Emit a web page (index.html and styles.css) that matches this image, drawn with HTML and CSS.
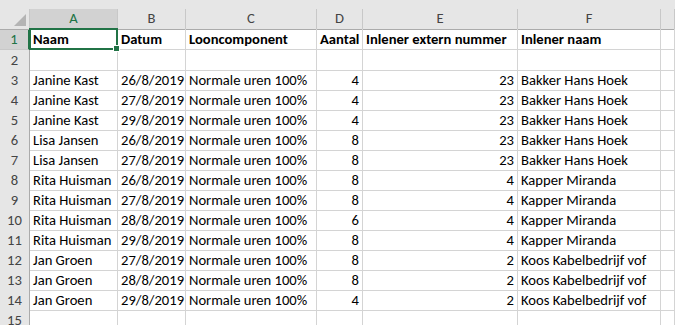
FILE: index.html
```html
<!DOCTYPE html>
<html lang="nl">
<head>
    <meta charset="UTF-8">
    <title>Uren</title>
    <link rel="stylesheet" href="styles.css">
</head>
<body>
    <div class="sheet">
        <div class="topband"></div>
        <div class="row head">
            <div class="corner"><span class="tri"></span></div>
            <div class="colhead sel">A</div>
            <div class="colhead">B</div>
            <div class="colhead">C</div>
            <div class="colhead">D</div>
            <div class="colhead">E</div>
            <div class="colhead">F</div>
            <div class="colhead"></div>
        </div>
        <div class="row first">
            <div class="rownum sel">1</div>
            <div class="cell b active">Naam</div>
            <div class="cell b">Datum</div>
            <div class="cell b">Looncomponent</div>
            <div class="cell b">Aantal</div>
            <div class="cell b">Inlener extern nummer</div>
            <div class="cell b">Inlener naam</div>
            <div class="cell"></div>
        </div>
        <div class="row">
            <div class="rownum">2</div>
            <div class="cell"></div><div class="cell"></div><div class="cell"></div><div class="cell"></div><div class="cell"></div><div class="cell"></div><div class="cell"></div>
        </div>
        <div class="row">
            <div class="rownum">3</div>
            <div class="cell">Janine Kast</div><div class="cell">26/8/2019</div><div class="cell">Normale uren 100%</div><div class="cell num">4</div><div class="cell num">23</div><div class="cell">Bakker Hans Hoek</div><div class="cell"></div>
        </div>
        <div class="row">
            <div class="rownum">4</div>
            <div class="cell">Janine Kast</div><div class="cell">27/8/2019</div><div class="cell">Normale uren 100%</div><div class="cell num">4</div><div class="cell num">23</div><div class="cell">Bakker Hans Hoek</div><div class="cell"></div>
        </div>
        <div class="row">
            <div class="rownum">5</div>
            <div class="cell">Janine Kast</div><div class="cell">29/8/2019</div><div class="cell">Normale uren 100%</div><div class="cell num">4</div><div class="cell num">23</div><div class="cell">Bakker Hans Hoek</div><div class="cell"></div>
        </div>
        <div class="row">
            <div class="rownum">6</div>
            <div class="cell">Lisa Jansen</div><div class="cell">26/8/2019</div><div class="cell">Normale uren 100%</div><div class="cell num">8</div><div class="cell num">23</div><div class="cell">Bakker Hans Hoek</div><div class="cell"></div>
        </div>
        <div class="row">
            <div class="rownum">7</div>
            <div class="cell">Lisa Jansen</div><div class="cell">27/8/2019</div><div class="cell">Normale uren 100%</div><div class="cell num">8</div><div class="cell num">23</div><div class="cell">Bakker Hans Hoek</div><div class="cell"></div>
        </div>
        <div class="row">
            <div class="rownum">8</div>
            <div class="cell">Rita Huisman</div><div class="cell">26/8/2019</div><div class="cell">Normale uren 100%</div><div class="cell num">8</div><div class="cell num">4</div><div class="cell">Kapper Miranda</div><div class="cell"></div>
        </div>
        <div class="row">
            <div class="rownum">9</div>
            <div class="cell">Rita Huisman</div><div class="cell">27/8/2019</div><div class="cell">Normale uren 100%</div><div class="cell num">8</div><div class="cell num">4</div><div class="cell">Kapper Miranda</div><div class="cell"></div>
        </div>
        <div class="row">
            <div class="rownum">10</div>
            <div class="cell">Rita Huisman</div><div class="cell">28/8/2019</div><div class="cell">Normale uren 100%</div><div class="cell num">6</div><div class="cell num">4</div><div class="cell">Kapper Miranda</div><div class="cell"></div>
        </div>
        <div class="row">
            <div class="rownum">11</div>
            <div class="cell">Rita Huisman</div><div class="cell">29/8/2019</div><div class="cell">Normale uren 100%</div><div class="cell num">8</div><div class="cell num">4</div><div class="cell">Kapper Miranda</div><div class="cell"></div>
        </div>
        <div class="row">
            <div class="rownum">12</div>
            <div class="cell">Jan Groen</div><div class="cell">27/8/2019</div><div class="cell">Normale uren 100%</div><div class="cell num">8</div><div class="cell num">2</div><div class="cell">Koos Kabelbedrijf vof</div><div class="cell"></div>
        </div>
        <div class="row">
            <div class="rownum">13</div>
            <div class="cell">Jan Groen</div><div class="cell">28/8/2019</div><div class="cell">Normale uren 100%</div><div class="cell num">8</div><div class="cell num">2</div><div class="cell">Koos Kabelbedrijf vof</div><div class="cell"></div>
        </div>
        <div class="row">
            <div class="rownum">14</div>
            <div class="cell">Jan Groen</div><div class="cell">29/8/2019</div><div class="cell">Normale uren 100%</div><div class="cell num">4</div><div class="cell num">2</div><div class="cell">Koos Kabelbedrijf vof</div><div class="cell"></div>
        </div>
        <div class="row">
            <div class="rownum">15</div>
            <div class="cell"></div><div class="cell"></div><div class="cell"></div><div class="cell"></div><div class="cell"></div><div class="cell"></div><div class="cell"></div>
        </div>
    </div>
</body>
</html>
```

FILE: styles.css
```css
body {
    margin: 0;
    overflow: hidden;
    background: #fff;
    font-family: Carlito, Calibri, Lato, "Open Sans", sans-serif;
    font-size: 14.6px;
    color: #000;
}
.sheet {
    width: 675px;
}
.topband {
    height: 9px;
    background: #e6e6e6;
}
.row {
    display: grid;
    grid-template-columns: 30px 88px 68px 131px 46px 155px 143px 1fr;
    height: 20px;
}
.row.first {
    height: 21px;
}
.head {
    height: 20px;
    background: #e6e6e6;
}
.corner {
    position: relative;
    background: #e6e6e6;
    border-right: 1px solid #c8c8c8;
    border-bottom: 1px solid #ababab;
}
.tri {
    position: absolute;
    right: 3px;
    bottom: 3px;
    width: 0;
    height: 0;
    border-left: 12px solid transparent;
    border-bottom: 12px solid #b4b4b4;
}
.colhead {
    box-sizing: border-box;
    border-right: 1px solid #c8c8c8;
    border-bottom: 1px solid #ababab;
    text-align: center;
    line-height: 19px;
    color: #444;
}
.colhead.sel {
    background: #d2d2d2;
    color: #217346;
    border-bottom: 2px solid #217346;
}
.rownum {
    box-sizing: border-box;
    background: #e6e6e6;
    border-right: 1px solid #ababab;
    border-bottom: 1px solid #c8c8c8;
    text-align: center;
    line-height: 20px;
    color: #444;
}
.rownum.sel {
    background: #d2d2d2;
    color: #217346;
    border-right: 2px solid #217346;
}
.cell {
    box-sizing: border-box;
    border-right: 1px solid #d4d4d4;
    border-bottom: 1px solid #d4d4d4;
    padding: 0 3px;
    line-height: 20px;
    white-space: nowrap;
    overflow: hidden;
}
.cell.b {
    font-weight: bold;
}
.cell.num {
    text-align: right;
}
.cell.active {
    position: relative;
    overflow: visible;
}
.cell.active::after {
    content: "";
    position: absolute;
    left: -1px;
    top: -1px;
    right: -1px;
    bottom: -1px;
    border: 2px solid #217346;
}
.cell.active::before {
    content: "";
    position: absolute;
    right: -3px;
    bottom: -3px;
    width: 5px;
    height: 5px;
    background: #217346;
    border: 1px solid #fff;
    z-index: 2;
}
```
